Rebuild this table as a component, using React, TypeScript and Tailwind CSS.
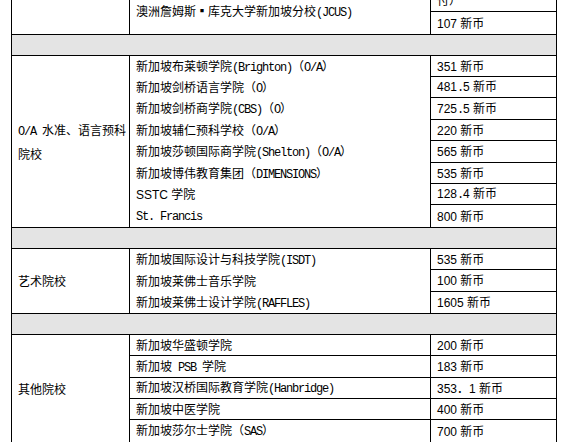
import React from "react";

type Kind = "c" | "m" | "n";
const cls: Record<Kind, string> = {
  c: "font-['Noto_Sans_CJK_SC',sans-serif]",
  m: "font-['Liberation_Mono',monospace] tracking-[-1.2px]",
  n: "font-['Liberation_Sans',sans-serif]",
};

function Txt({ s, sans }: { s: string; sans?: boolean }) {
  const runs: { t: string; k: Kind }[] = [];
  for (const ch of s) {
    const code = ch.codePointAt(0)!;
    let k: Kind;
    if (code > 127) k = "c";
    else if (sans && /[0-9A-Za-z ]/.test(ch)) k = "n";
    else k = "m";
    const last = runs[runs.length - 1];
    if (last && last.k === k) last.t += ch;
    else runs.push({ t: ch, k });
  }
  return (
    <span>
      {runs.map((r, i) => (
        <span key={i} className={cls[r.k]}>
          {r.t}
        </span>
      ))}
    </span>
  );
}

const H: Record<number, string> = { 21: "h-[21px]", 22: "h-[22px]" };

type Row = { name?: string; price: string; h: number; nameSans?: boolean };

function Group({
  label,
  rows,
  lined,
  single,
}: {
  label?: string;
  rows: Row[];
  lined?: boolean;
  single?: string;
}) {
  return (
    <div className="flex border-b border-black">
      <div className="w-[118px] shrink-0 border-r border-black flex items-center pl-[6px] leading-[21px]">
        {label && (
          <div>
            <Txt s={label} />
          </div>
        )}
      </div>
      <div
        className={
          "w-[301px] shrink-0 border-r border-black flex flex-col " +
          (lined ? "divide-y divide-black" : "")
        }
      >
        {single ? (
          <div className="flex-1 flex items-center pl-[6px] whitespace-nowrap">
            <Txt s={single} />
          </div>
        ) : (
          rows.map((r, i) => (
            <div key={i} className={H[r.h] + " flex items-center pl-[6px] whitespace-nowrap"}>
              <Txt s={r.name ?? ""} sans={r.nameSans} />
            </div>
          ))
        )}
      </div>
      <div className="w-[125px] shrink-0 flex flex-col divide-y divide-black">
        {rows.map((r, i) => (
          <div key={i} className={H[r.h] + " flex items-center pl-[6px] whitespace-nowrap"}>
            <Txt s={r.price} sans />
          </div>
        ))}
      </div>
    </div>
  );
}

function Gray() {
  return <div className="h-[21px] bg-[#e4e4e4] border-b border-black" />;
}

export default function App() {
  return (
    <div className="w-[564px] h-[442px] overflow-hidden bg-white text-[12px] text-black leading-none">
      <div className="-mt-[10px] ml-[11px] w-[546px] border-x border-black">
        <Group
          single="澳洲詹姆斯▪库克大学新加坡分校(JCUS)"
          rows={[
            { price: "付）", h: 22 },
            { price: "107 新币", h: 22 },
          ]}
        />
        <Gray />
        <Group
          label="O/A 水准、语言预科院校"
          rows={[
            { name: "新加坡布莱顿学院(Brighton)（O/A）", price: "351 新币", h: 21 },
            { name: "新加坡剑桥语言学院（O）", price: "481.5 新币", h: 21 },
            { name: "新加坡剑桥商学院(CBS)（O）", price: "725.5 新币", h: 22 },
            { name: "新加坡辅仁预科学校（O/A）", price: "220 新币", h: 21 },
            { name: "新加坡莎顿国际商学院(Shelton)（O/A）", price: "565 新币", h: 22 },
            { name: "新加坡博伟教育集团（DIMENSIONS）", price: "535 新币", h: 21 },
            { name: "SSTC 学院", price: "128.4 新币", h: 21, nameSans: true },
            { name: "St. Francis", price: "800 新币", h: 22 },
          ]}
        />
        <Gray />
        <Group
          label="艺术院校"
          rows={[
            { name: "新加坡国际设计与科技学院(ISDT)", price: "535 新币", h: 21 },
            { name: "新加坡莱佛士音乐学院", price: "100 新币", h: 22 },
            { name: "新加坡莱佛士设计学院(RAFFLES)", price: "1605 新币", h: 21 },
          ]}
        />
        <Gray />
        <Group
          label="其他院校"
          lined
          rows={[
            { name: "新加坡华盛顿学院", price: "200 新币", h: 21 },
            { name: "新加坡 PSB 学院", price: "183 新币", h: 22 },
            { name: "新加坡汉桥国际教育学院(Hanbridge)", price: "353．1 新币", h: 21 },
            { name: "新加坡中医学院", price: "400 新币", h: 21 },
            { name: "新加坡莎尔士学院（SAS）", price: "700 新币", h: 22 },
          ]}
        />
      </div>
    </div>
  );
}
